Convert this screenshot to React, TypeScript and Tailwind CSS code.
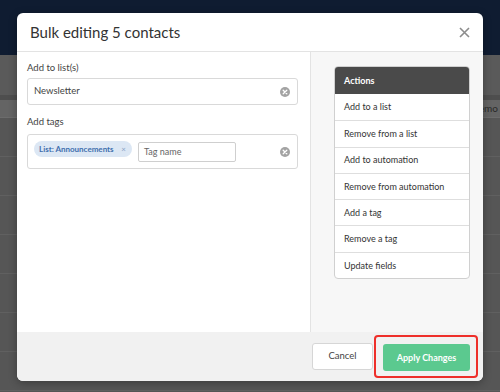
import React from 'react';

const actions = [
  'Add to a list',
  'Remove from a list',
  'Add to automation',
  'Remove from automation',
  'Add a tag',
  'Remove a tag',
  'Update fields',
];

function ClearIcon() {
  return (
    <svg width="10" height="10" viewBox="0 0 10 10" className="shrink-0">
      <circle cx="5" cy="5" r="5" fill="#a3a3a3" />
      <path d="M3.2 3.2 L6.8 6.8 M6.8 3.2 L3.2 6.8" stroke="#fff" strokeWidth="1.3" strokeLinecap="round" />
    </svg>
  );
}

export default function App() {
  return (
    <div
      className="relative w-[500px] h-[392px] overflow-hidden bg-[#565656]"
      style={{ fontFamily: 'Lato, "Open Sans", sans-serif' }}
    >
      {/* page behind the overlay */}
      <div className="h-[55px] bg-[#0f1c31]" />
      <div className="h-[40px] bg-[#5a5a5a]" />
      <div className="h-[5px] bg-[#4e4e4e]" />
      <div className="h-[18px] bg-[#646464] border-b border-[#6c6c6c] flex justify-end items-center pr-[2px]">
        <span className="text-[10px] text-[#2a2a2a]">temo</span>
      </div>
      {[0, 1, 2, 3, 4, 5, 6].map((i) => (
        <div key={i} className="h-[39px] border-b border-[#606060]" />
      ))}

      {/* modal */}
      <div className="absolute left-[17px] top-[13px] w-[466px] h-[368px] bg-white rounded-[6px] overflow-hidden flex flex-col shadow-[0_2px_8px_rgba(0,0,0,0.3)]">
        <div className="h-[39px] shrink-0 flex items-center justify-between pl-[13px] pr-[13px] border-b border-[#e3e3e3]">
          <h1 className="text-[15px] text-[#333] pt-[1px]">Bulk editing 5 contacts</h1>
          <svg width="11" height="11" viewBox="0 0 11 11">
            <path d="M1 1 L10 10 M10 1 L1 10" stroke="#8c8c8c" strokeWidth="1.6" />
          </svg>
        </div>

        <div className="h-[280px] shrink-0 flex">
          <div className="w-[293px] pl-[10px] pr-[12px] pt-[10px]">
            <label className="block text-[9.5px] text-[#444] leading-[12px]">Add to list(s)</label>
            <div className="mt-[4px] h-[27px] border border-[#d9d9d9] rounded-[3px] flex items-center justify-between pl-[6px] pr-[7px]">
              <span className="text-[9.5px] text-[#444]">Newsletter</span>
              <ClearIcon />
            </div>
            <label className="block mt-[11px] text-[9.5px] text-[#444] leading-[12px]">Add tags</label>
            <div className="mt-[6px] h-[35px] border border-[#d9d9d9] rounded-[3px] flex items-center pl-[6px] pr-[7px]">
              <div className="h-[16px] w-[98px] -mt-[5px] rounded-full bg-[#dce7f4] flex items-center pl-[5px] pr-[6px] justify-between">
                <span className="text-[8px] font-bold text-[#3f6fae] whitespace-nowrap">List: Announcements</span>
                <span className="text-[8px] text-[#8aa3c4]">×</span>
              </div>
              <div className="ml-[6px] h-[20px] w-[98px] border border-[#cfcfcf] rounded-[2px] flex items-center pl-[5px]">
                <span className="text-[9px] text-[#666]">Tag name</span>
              </div>
              <div className="flex-1" />
              <ClearIcon />
            </div>
          </div>

          <div className="flex-1 bg-[#f7f7f7] border-l border-[#e3e3e3] pl-[23px] pr-[13px] pt-[14px]">
            <div className="border border-[#d0d0d0] rounded-[4px] overflow-hidden bg-white">
              <div className="h-[27px] bg-[#4a4a4a] flex items-center pl-[9px]">
                <span className="text-[9px] font-bold text-white">Actions</span>
              </div>
              {actions.map((a, i) => (
                <div
                  key={a}
                  className={`h-[26.3px] flex items-center pl-[9px] ${i > 0 ? 'border-t border-[#dedede]' : ''}`}
                >
                  <span className="text-[9px] text-[#333]">{a}</span>
                </div>
              ))}
            </div>
          </div>
        </div>

        <div className="flex-1 bg-[#f1f1f1] flex items-center justify-end pr-[5px]">
          <button className="h-[27px] w-[61px] bg-white border border-[#d6d6d6] rounded-[3px] text-[9.5px] text-[#444]">
            Cancel
          </button>
          <div className="ml-[1px] border-2 border-[#ee2f2a] rounded-[4px] pl-[7px] pr-[6px] pt-[6px] pb-[5px]">
            <button className="h-[27px] w-[87px] bg-[#5bc98f] rounded-[3px] text-[9px] font-bold text-white">
              Apply Changes
            </button>
          </div>
        </div>
      </div>
    </div>
  );
}
